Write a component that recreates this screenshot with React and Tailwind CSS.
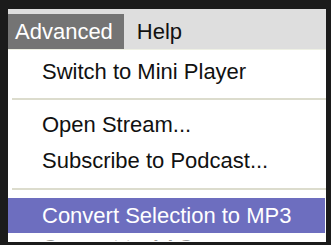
export default function App() {
  const font = { fontFamily: '"Liberation Sans", Arial, sans-serif' };
  return (
    <div className="w-[331px] h-[245px] bg-[#1b1b1b] pt-[9px] pl-[8px] pr-[5px] pb-[3px] overflow-hidden" style={font}>
      <div className="w-full h-full bg-white flex flex-col overflow-hidden">
        <div className="h-[41px] shrink-0 bg-[#dedede] border-b border-[#eef0e4] flex items-end">
          <div className="h-[35px] bg-[#747474] text-white text-[22px] leading-[35px] pl-[7px] pr-[11px]">Advanced</div>
          <div className="h-[35px] text-[#111] text-[22px] leading-[35px] pl-[13px]">Help</div>
        </div>
        <div className="h-[4px] shrink-0" />
        <div className="h-[36px] shrink-0 pl-[34px] text-[22px] leading-[36px] text-[#111]">Switch to Mini Player</div>
        <div className="h-[17px] shrink-0 flex items-center pl-[4px]">
          <div className="h-[2px] w-full bg-[#dcdccd]" />
        </div>
        <div className="h-[36px] shrink-0 pl-[34px] text-[22px] leading-[36px] text-[#111]">Open Stream...</div>
        <div className="h-[36px] shrink-0 pl-[34px] text-[22px] leading-[36px] text-[#111]">Subscribe to Podcast...</div>
        <div className="h-[19px] shrink-0 flex items-center pl-[4px]">
          <div className="h-[2px] w-full bg-[#dcdccd]" />
        </div>
        <div className="h-[35px] shrink-0 pl-[34px] text-[22px] leading-[35px] text-white bg-[#6d6ebf] mr-[1px]">Convert Selection to MP3</div>
        <div className="h-[8px] shrink-0 overflow-hidden pl-[34px] pt-[4px]">
          <div className="text-[22px] leading-[22px] text-[#9a9a9a]">Convert to AAC</div>
        </div>
      </div>
    </div>
  );
}
